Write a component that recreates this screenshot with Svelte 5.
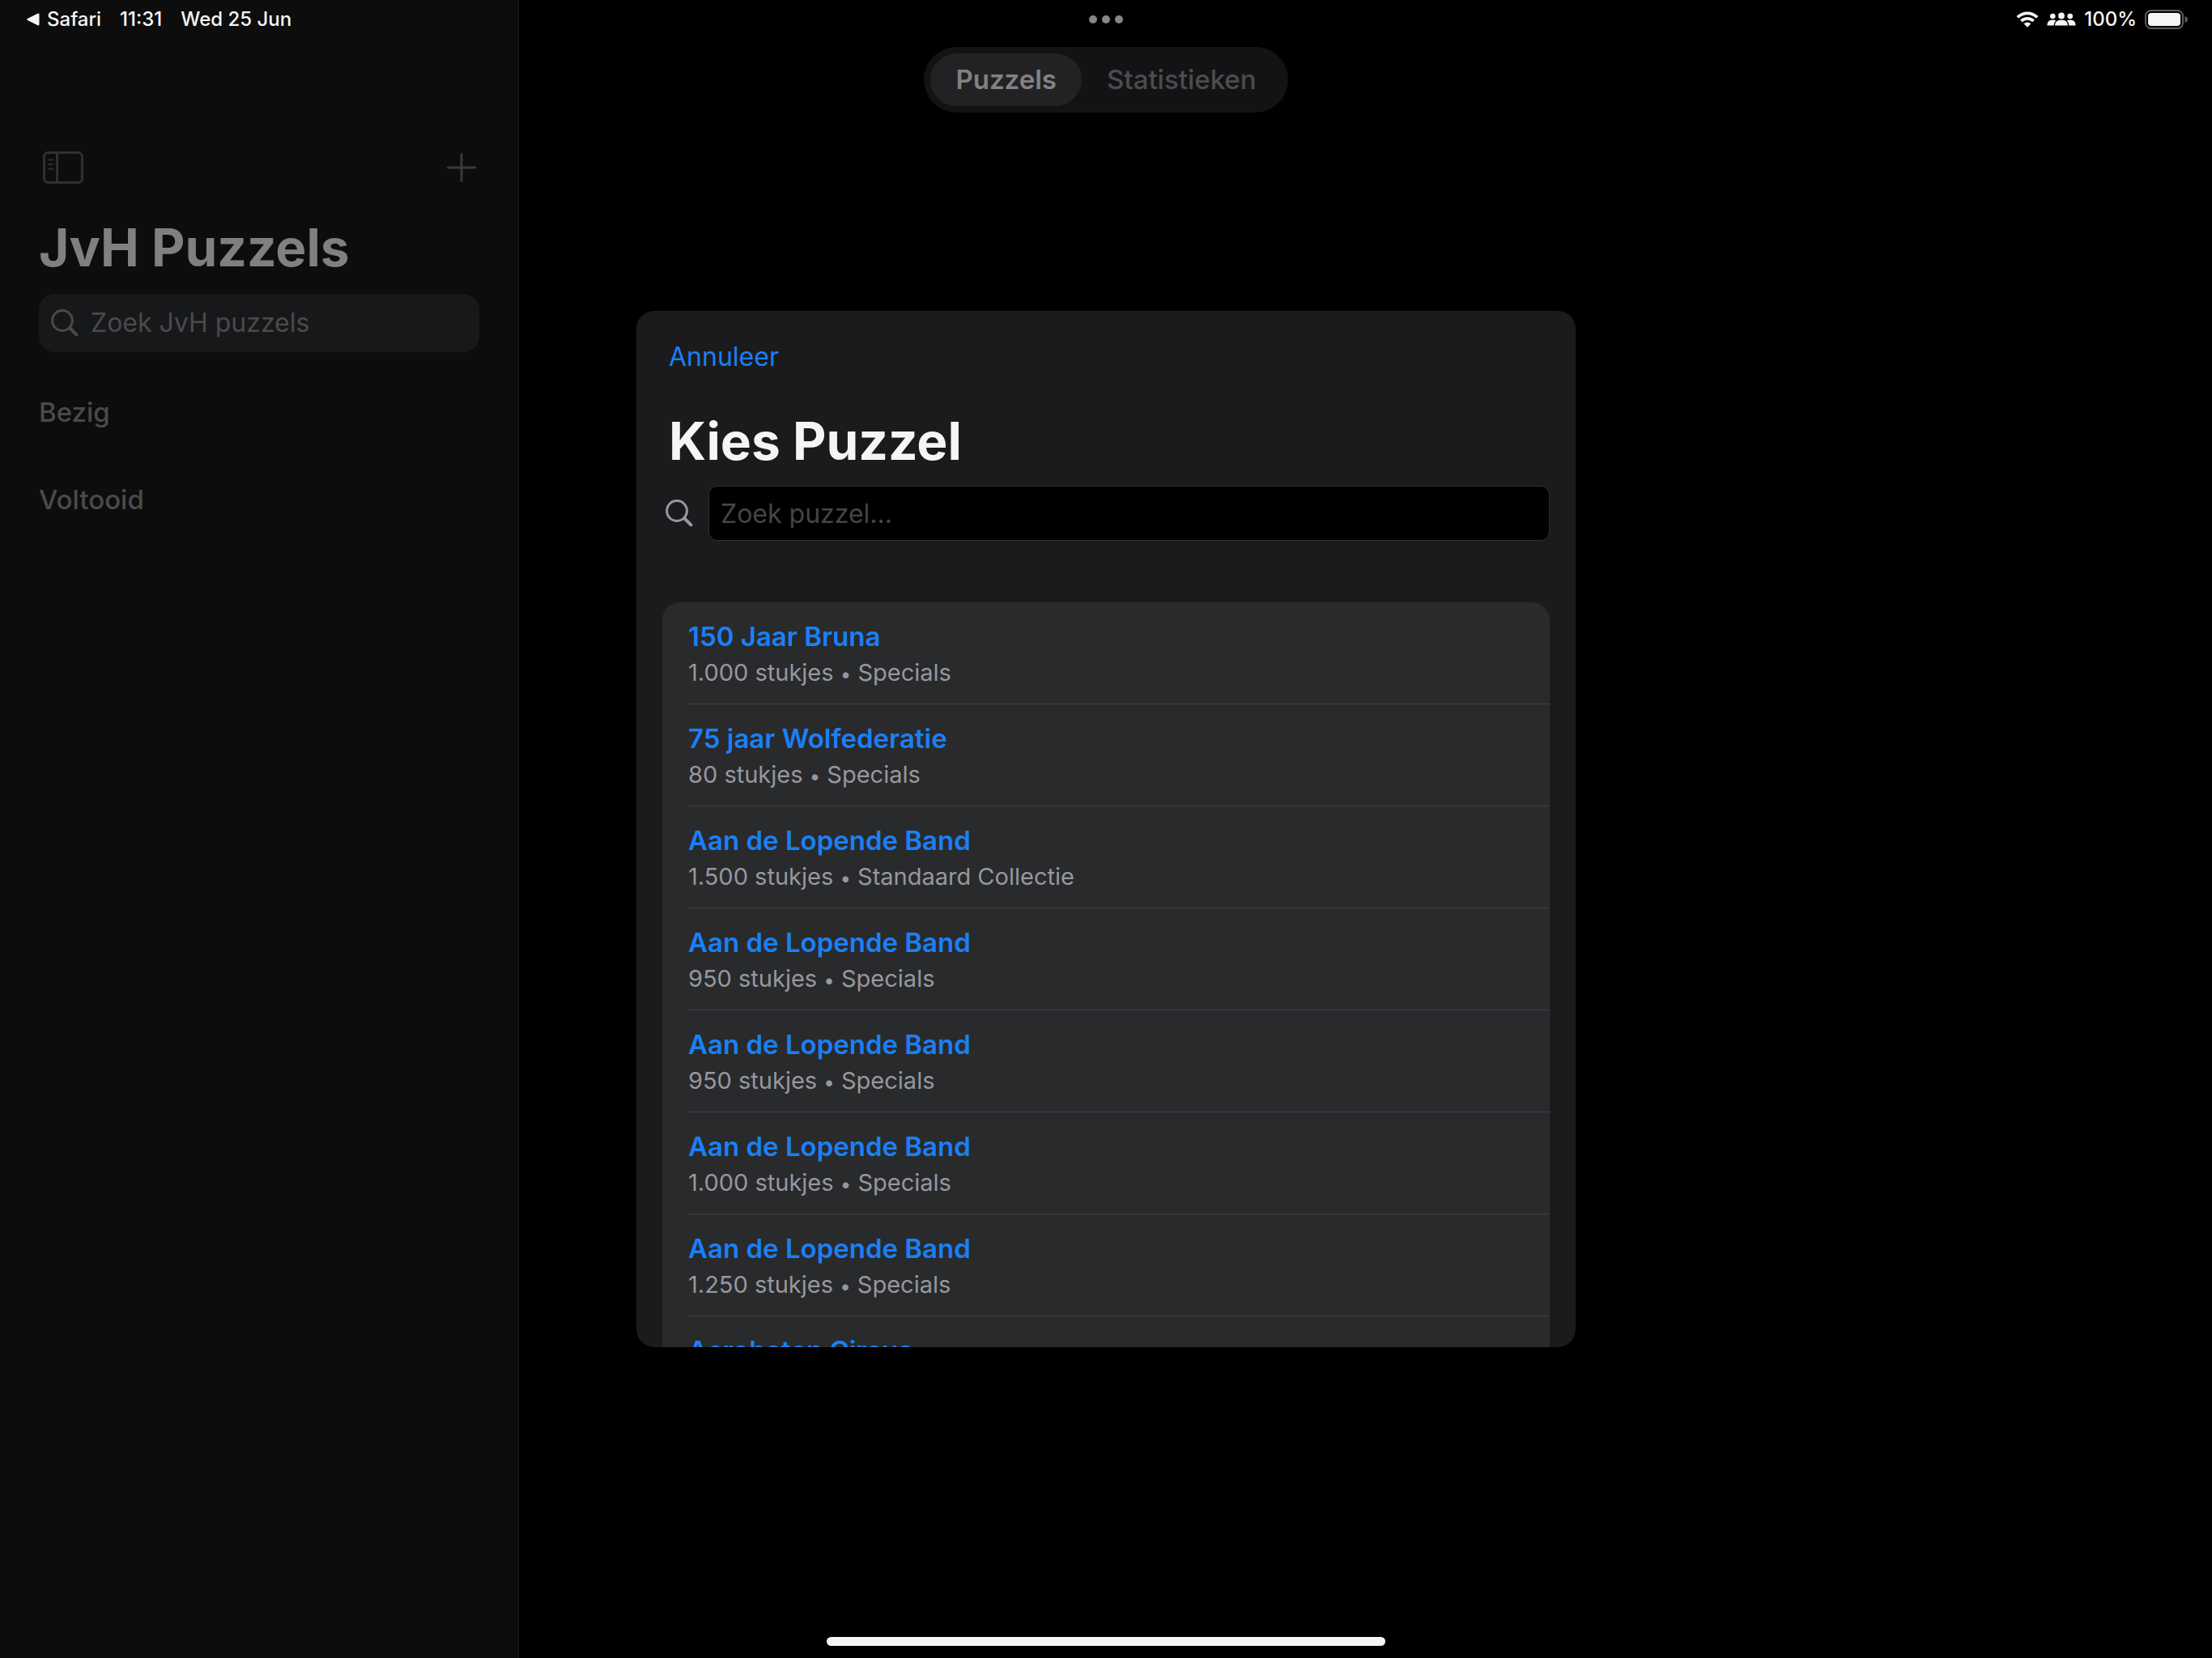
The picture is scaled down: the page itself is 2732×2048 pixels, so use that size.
<script>
  const tabs = ['Puzzels', 'Statistieken'];
  let activeTab = $state('Puzzels');
  let sidebarQuery = $state('');
  let puzzleQuery = $state('');

  const sections = ['Bezig', 'Voltooid'];

  const puzzles = [
    { title: '150 Jaar Bruna', pieces: '1.000', series: 'Specials' },
    { title: '75 jaar Wolfederatie', pieces: '80', series: 'Specials' },
    { title: 'Aan de Lopende Band', pieces: '1.500', series: 'Standaard Collectie' },
    { title: 'Aan de Lopende Band', pieces: '950', series: 'Specials' },
    { title: 'Aan de Lopende Band', pieces: '950', series: 'Specials' },
    { title: 'Aan de Lopende Band', pieces: '1.000', series: 'Specials' },
    { title: 'Aan de Lopende Band', pieces: '1.250', series: 'Specials' },
    { title: 'Acrobaten Circus' }
  ];
</script>

{#snippet magnifier()}
  <svg class="magnifier" viewBox="0 0 34 34" aria-hidden="true">
    <circle cx="14" cy="14" r="12.4" />
    <path d="M23.500 23.500 31.400 31.400" />
  </svg>
{/snippet}

<div class="screen">
  <div class="split">
    <aside class="sidebar">
      <div class="toolbar">
        <button class="icon-button" aria-label="Navigatiekolom">
          <svg class="sidebar-icon" viewBox="0 0 50 40" aria-hidden="true">
            <rect x="1.5" y="1.5" width="47" height="37" rx="5" />
            <path d="M17.5 2V38" />
            <path class="thin" d="M7 10.5h5M7 16h5M7 21.500h5" />
          </svg>
        </button>
        <button class="icon-button" aria-label="Voeg toe">
          <svg class="plus-icon" viewBox="0 0 36 36" aria-hidden="true">
            <path d="M18 1.500V34.500M1.500 18H34.500" />
          </svg>
        </button>
      </div>
      <h1>JvH Puzzels</h1>
      <label class="side-search">
        {@render magnifier()}
        <input type="search" placeholder="Zoek JvH puzzels" aria-label="Zoek JvH puzzels" bind:value={sidebarQuery} />
      </label>
      {#each sections as section}
        <h2>{section}</h2>
      {/each}
    </aside>
    <main></main>
  </div>

  <header class="chrome">
    <div class="status">
      <div class="status-left">
        <a class="back" href="#safari">
          <svg class="back-icon" viewBox="0 0 16 16" aria-hidden="true">
            <path d="M1 7 13.500 .8Q15.500 .1 15.500 2V14Q15.500 15.900 13.500 15.200L1 9Q-.6 8 1 7Z" />
          </svg>
          <span>Safari</span>
        </a>
        <time>11:31</time>
        <span>Wed 25 Jun</span>
      </div>
      <button class="dots" aria-label="Multitasking"><i></i><i></i><i></i></button>
      <div class="status-right">
        <svg class="wifi" viewBox="0 0 28 20" aria-hidden="true">
          <path class="arc" d="M1.800 7.400A17.300 17.300 0 0 1 26.200 7.400" />
          <path class="arc" d="M6.400 12A10.800 10.800 0 0 1 21.600 12" />
          <path d="M14 19.800 9.600 15.300Q14 11.600 18.400 15.300Z" />
        </svg>
        <svg class="people" viewBox="0 0 36 18" aria-hidden="true">
          <circle cx="7.300" cy="5" r="3.300" />
          <circle cx="28.700" cy="5" r="3.300" />
          <path d="M.3 16.500Q.3 9.800 7.300 9.600 9.500 9.600 11.200 10.600 8.500 13 8.600 16.500Z" />
          <path d="M35.700 16.500Q35.700 9.800 28.700 9.600 26.500 9.600 24.800 10.600 27.500 13 27.400 16.500Z" />
          <circle cx="18" cy="4.400" r="3.900" />
          <path d="M10 16.500Q10.200 9.700 18 9.600 25.800 9.700 26 16.500Z" />
        </svg>
        <span>100%</span>
        <svg class="battery" viewBox="0 0 54 24" aria-hidden="true">
          <rect class="shell" x="1" y="1" width="46" height="22" rx="6.500" />
          <rect x="4" y="4" width="40" height="16" rx="4" />
          <path class="nub" d="M49.500 8Q53 9 53 12T49.500 16Z" />
        </svg>
      </div>
    </div>
    <nav class="tabs">
      {#each tabs as tab}
        <button class:active={activeTab === tab} onclick={() => (activeTab = tab)}>{tab}</button>
      {/each}
    </nav>
  </header>

  <div class="sheet" role="dialog" aria-labelledby="sheet-title">
    <button class="cancel">Annuleer</button>
    <h2 id="sheet-title" class="sheet-title">Kies Puzzel</h2>
    <label class="sheet-search">
      {@render magnifier()}
      <input type="text" placeholder="Zoek puzzel..." aria-label="Zoek puzzel" bind:value={puzzleQuery} />
    </label>
    <ul class="list">
      {#each puzzles as puzzle}
        <li>
          <button class="row">
            <span class="name">{puzzle.title}</span>
            {#if puzzle.pieces}
              <span class="detail">{puzzle.pieces} stukjes <span class="bullet">•</span> {puzzle.series}</span>
            {/if}
          </button>
        </li>
      {/each}
    </ul>
  </div>

  <div class="home-indicator"></div>
</div>

<style>
  :global(body) {
    background: #000;
  }

  .screen {
    display: grid;
    grid-template: minmax(0, 1fr) / minmax(0, 1fr);
    height: 100vh;
    overflow: hidden;
    background: #000;
    color: #f5f5f5;
    font-family: Inter, 'Liberation Sans', sans-serif;
    font-size: 32px;
    line-height: 44px;
  }

  .screen > * {
    grid-area: 1 / 1;
  }

  button,
  input {
    margin: 0;
    padding: 0;
    border: 0;
    background: none;
    color: inherit;
    font: inherit;
  }

  h1,
  h2 {
    margin: 0;
  }

  svg {
    flex: none;
    display: block;
  }

  .split {
    display: flex;
  }

  .sidebar {
    box-sizing: border-box;
    width: 641px;
    flex: none;
    padding: 179px 48px 0;
    border-right: 1px solid #1a1a1b;
    background: #0d0d0d;
  }

  main {
    flex: 1;
  }

  .toolbar {
    display: flex;
    align-items: center;
    justify-content: space-between;
    height: 56px;
    padding: 0 4px;
  }

  .icon-button svg {
    fill: none;
    stroke: #3a3a3b;
    stroke-width: 3;
    stroke-linecap: round;
  }

  .sidebar-icon {
    width: 52px;
    height: 40px;
  }

  .icon-button .sidebar-icon {
    stroke: #303031;
  }

  .icon-button .thin {
    stroke-width: 2;
  }

  .plus-icon {
    width: 36px;
    height: 36px;
  }

  h1,
  .sheet-title {
    font-size: 64px;
    line-height: 80px;
    font-weight: 700;
  }

  h1 {
    margin-top: 31px;
    color: #808080;
  }

  .magnifier {
    width: 34px;
    height: 34px;
    fill: none;
    stroke: currentColor;
    stroke-width: 3;
    stroke-linecap: round;
  }

  .magnifier path {
    stroke-width: 4;
  }

  input {
    flex: 1;
    min-width: 0;
    outline: 0;
    appearance: none;
  }

  .side-search {
    display: flex;
    align-items: center;
    gap: 15px;
    height: 72px;
    margin: 17px 0 52px;
    padding: 0 15px;
    border-radius: 20px;
    background: #17181a;
    color: #4a4a4c;
  }

  .side-search input::placeholder {
    color: #4a4a4c;
    opacity: 1;
  }

  .sidebar h2 {
    margin-bottom: 64px;
    color: #4a4a4c;
    font-size: 33px;
    line-height: 44px;
    font-weight: 500;
  }

  .chrome {
    display: flex;
    flex-direction: column;
    align-items: center;
    gap: 10px;
    z-index: 1;
  }

  .status {
    box-sizing: border-box;
    display: grid;
    grid-template-columns: 1fr auto 1fr;
    align-items: center;
    width: 100%;
    height: 48px;
    padding: 0 29px;
    font-size: 24px;
    line-height: 28px;
    font-weight: 500;
  }

  .status-left,
  .status-right {
    display: flex;
    align-items: center;
  }

  .status-left {
    gap: 23px;
    padding-left: 4px;
  }

  .status-right {
    justify-content: flex-end;
    gap: 10px;
  }

  .back {
    display: flex;
    align-items: center;
    gap: 9px;
    color: inherit;
    text-decoration: none;
  }

  .status svg {
    fill: #f5f5f5;
  }

  .back-icon {
    width: 16px;
    height: 16px;
  }

  .wifi {
    width: 28px;
    height: 20px;
  }

  .wifi .arc {
    fill: none;
    stroke: #f5f5f5;
    stroke-width: 3.6;
  }

  .people {
    width: 36px;
    height: 18px;
  }

  .battery {
    width: 54px;
    height: 24px;
  }

  .battery .shell {
    fill: none;
    stroke: #5c5c5c;
    stroke-width: 2;
  }

  .battery .nub {
    fill: #5c5c5c;
  }

  .dots {
    display: flex;
    gap: 6px;
  }

  .dots i {
    width: 10px;
    height: 10px;
    border-radius: 50%;
    background: #868686;
  }

  .tabs {
    display: flex;
    padding: 8px;
    border-radius: 41px;
    background: #131315;
  }

  .tabs button {
    height: 65px;
    padding: 0 31px 2px;
    border-radius: 33px;
    color: #4c4c4f;
    font-size: 33px;
    font-weight: 500;
  }

  .tabs .active {
    background: #222224;
    color: #828282;
    font-weight: 600;
  }

  .sheet {
    box-sizing: border-box;
    place-self: center;
    display: flex;
    flex-direction: column;
    width: min(1160px, 90%);
    height: min(1280px, 90%);
    padding: 35px 32px 0;
    overflow: hidden;
    border-radius: 22px;
    background: #1b1b1d;
    z-index: 2;
  }

  .cancel {
    align-self: flex-start;
    padding: 0 8px;
    color: #1a80f6;
  }

  .sheet-title {
    margin-top: 42px;
    padding: 0 8px;
  }

  .sheet-search {
    display: flex;
    flex: none;
    align-items: center;
    gap: 19px;
    margin: 15px 0 76px;
    padding-left: 4px;
    color: #98989f;
  }

  .sheet-search input {
    box-sizing: border-box;
    height: 68px;
    padding: 0 14px;
    border: 1px solid #2f2f31;
    border-radius: 11px;
    background: #000;
    color: #f5f5f5;
  }

  .sheet-search input::placeholder {
    color: #454547;
    opacity: 1;
  }

  .list {
    flex: none;
    margin: 0;
    padding: 0 0 0 32px;
    list-style: none;
    border-radius: 22px 22px 0 0;
    background: #292a2c;
  }

  li {
    border-bottom: 1px solid #414245;
  }

  .row {
    display: flex;
    flex-direction: column;
    width: 100%;
    height: 125px;
    padding-top: 20px;
    text-align: left;
  }

  .name {
    color: #1a80f6;
    font-size: 33px;
    line-height: 44px;
    font-weight: 600;
  }

  .detail {
    color: #97979e;
    font-size: 29px;
    line-height: 46px;
  }

  .bullet {
    font-size: 24px;
    line-height: 24px;
  }

  .home-indicator {
    place-self: end center;
    width: 690px;
    height: 11px;
    margin-bottom: 15px;
    border-radius: 6px;
    background: #f5f5f5;
    z-index: 3;
  }
</style>
